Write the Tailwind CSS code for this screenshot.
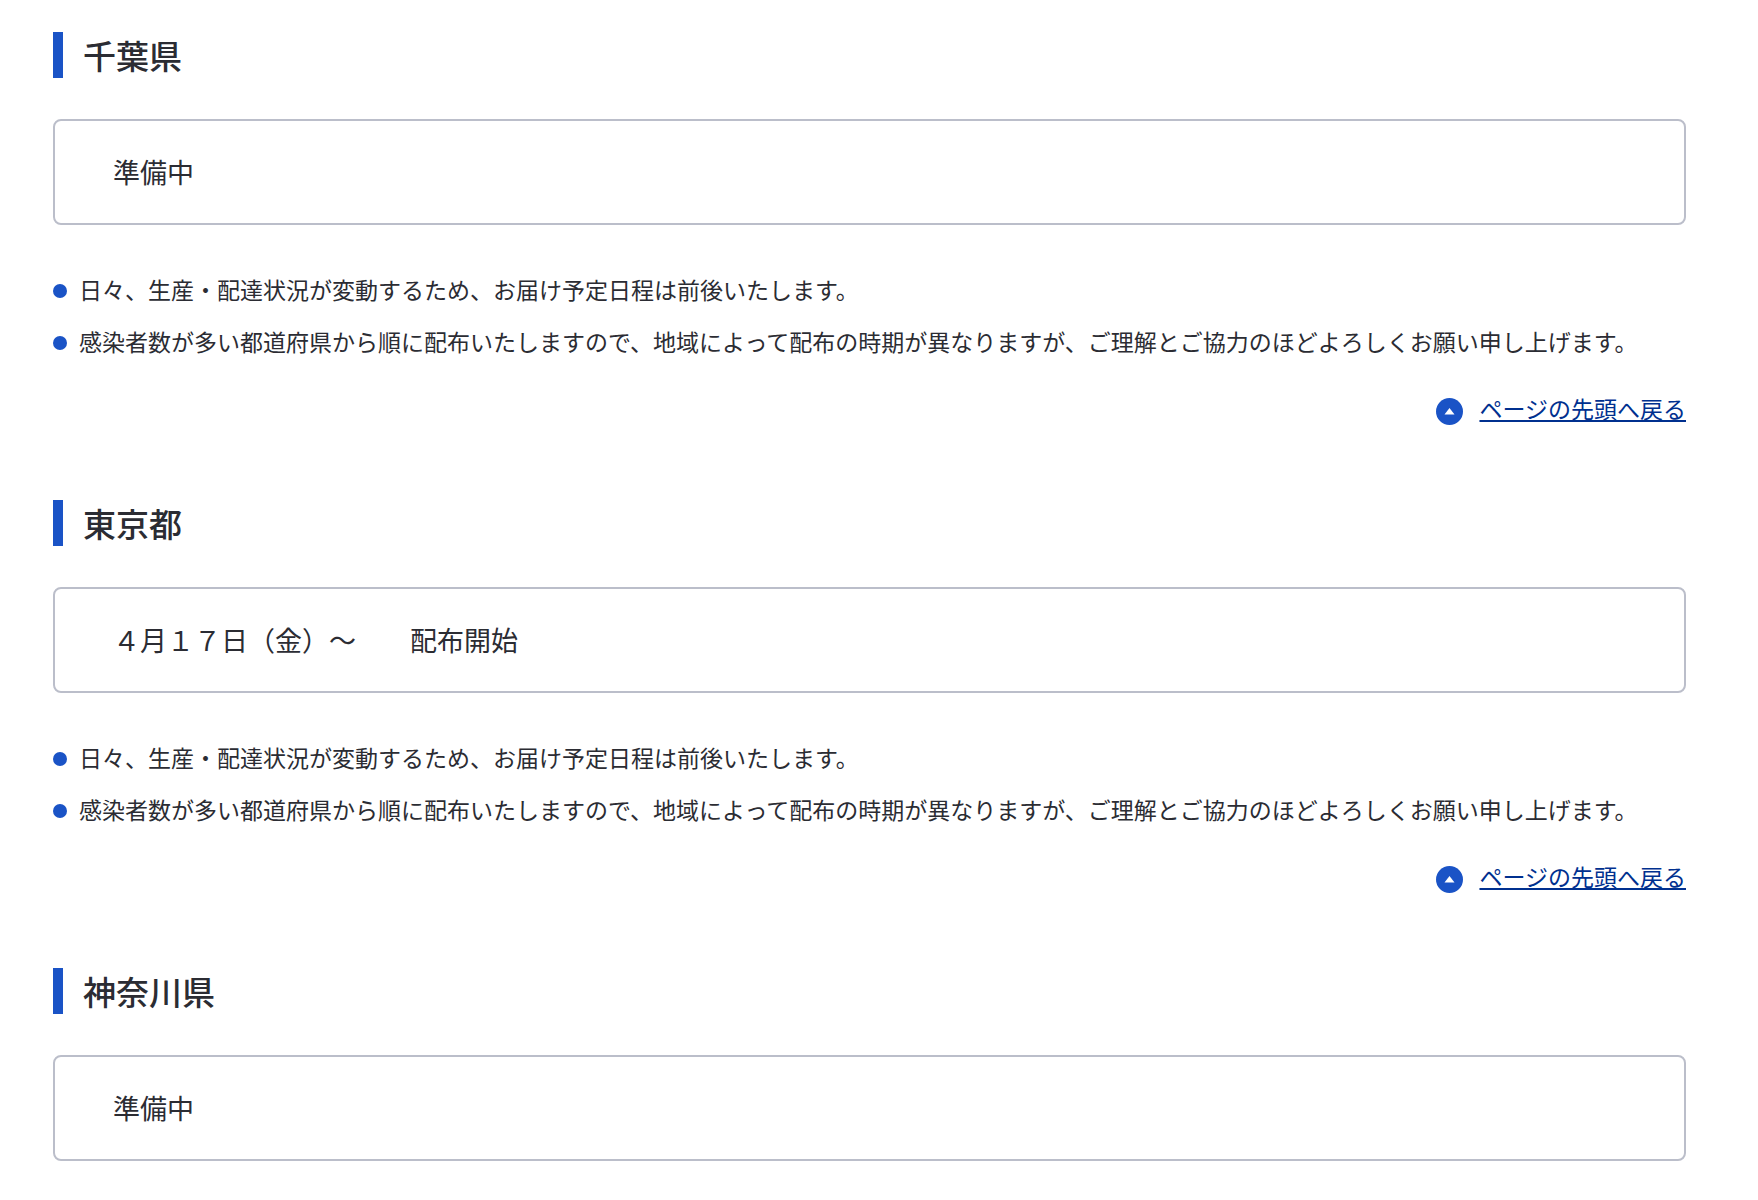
<!DOCTYPE html>
<html lang="ja">
<head>
    <meta charset="UTF-8">
    <meta name="viewport" content="width=device-width, initial-scale=1.0">
    <title>都道府県別の配布状況</title>
    <script src="https://cdn.jsdelivr.net/npm/@tailwindcss/browser@4"></script>
</head>
<body class="bg-white text-[#2b2c33] font-['Noto_Sans_CJK_JP',sans-serif]">
    <main id="top" class="pt-8 pb-5 pl-[53px] pr-[72px] space-y-[74px]">
        <!-- Chiba -->
        <section>
            <h2 class="border-l-10 border-[#1a53c6] pl-5 text-[33px] leading-[46px] font-medium">千葉県</h2>
            <div class="mt-[41px] border-2 border-[#bbbeca] rounded-lg px-[58px] py-8 text-[27px] leading-[38px]">
                <p>準備中</p>
            </div>
            <ul class="mt-[46px] space-y-4 text-[23px] leading-9">
                <li class="flex items-center gap-3"><span class="mt-1 size-[14px] shrink-0 rounded-full bg-[#1a53c6]"></span>日々、生産・配達状況が変動するため、お届け予定日程は前後いたします。</li>
                <li class="flex items-center gap-3"><span class="mt-1 size-[14px] shrink-0 rounded-full bg-[#1a53c6]"></span>感染者数が多い都道府県から順に配布いたしますので、地域によって配布の時期が異なりますが、ご理解とご協力のほどよろしくお願い申し上げます。</li>
            </ul>
            <div class="mt-[31px] flex justify-end text-[23px] leading-9">
                <a href="#top" class="flex items-center gap-4 text-[#00308f]">
                    <svg class="mt-1.5 size-[27px]" viewBox="0 0 27 27" aria-hidden="true"><circle cx="13.5" cy="13.5" r="13.5" fill="#1a53c6"/><path d="M13.5 10l5 6.5h-10z" fill="#fff"/></svg>
                    <span class="underline">ページの先頭へ戻る</span>
                </a>
            </div>
        </section>

        <!-- Tokyo -->
        <section>
            <h2 class="border-l-10 border-[#1a53c6] pl-5 text-[33px] leading-[46px] font-medium">東京都</h2>
            <div class="mt-[41px] border-2 border-[#bbbeca] rounded-lg px-[58px] py-8 text-[27px] leading-[38px]">
                <p>４月１７日（金）～　　配布開始</p>
            </div>
            <ul class="mt-[46px] space-y-4 text-[23px] leading-9">
                <li class="flex items-center gap-3"><span class="mt-1 size-[14px] shrink-0 rounded-full bg-[#1a53c6]"></span>日々、生産・配達状況が変動するため、お届け予定日程は前後いたします。</li>
                <li class="flex items-center gap-3"><span class="mt-1 size-[14px] shrink-0 rounded-full bg-[#1a53c6]"></span>感染者数が多い都道府県から順に配布いたしますので、地域によって配布の時期が異なりますが、ご理解とご協力のほどよろしくお願い申し上げます。</li>
            </ul>
            <div class="mt-[31px] flex justify-end text-[23px] leading-9">
                <a href="#top" class="flex items-center gap-4 text-[#00308f]">
                    <svg class="mt-1.5 size-[27px]" viewBox="0 0 27 27" aria-hidden="true"><circle cx="13.5" cy="13.5" r="13.5" fill="#1a53c6"/><path d="M13.5 10l5 6.5h-10z" fill="#fff"/></svg>
                    <span class="underline">ページの先頭へ戻る</span>
                </a>
            </div>
        </section>

        <!-- Kanagawa -->
        <section>
            <h2 class="border-l-10 border-[#1a53c6] pl-5 text-[33px] leading-[46px] font-medium">神奈川県</h2>
            <div class="mt-[41px] border-2 border-[#bbbeca] rounded-lg px-[58px] py-8 text-[27px] leading-[38px]">
                <p>準備中</p>
            </div>
        </section>
    </main>
</body>
</html>
